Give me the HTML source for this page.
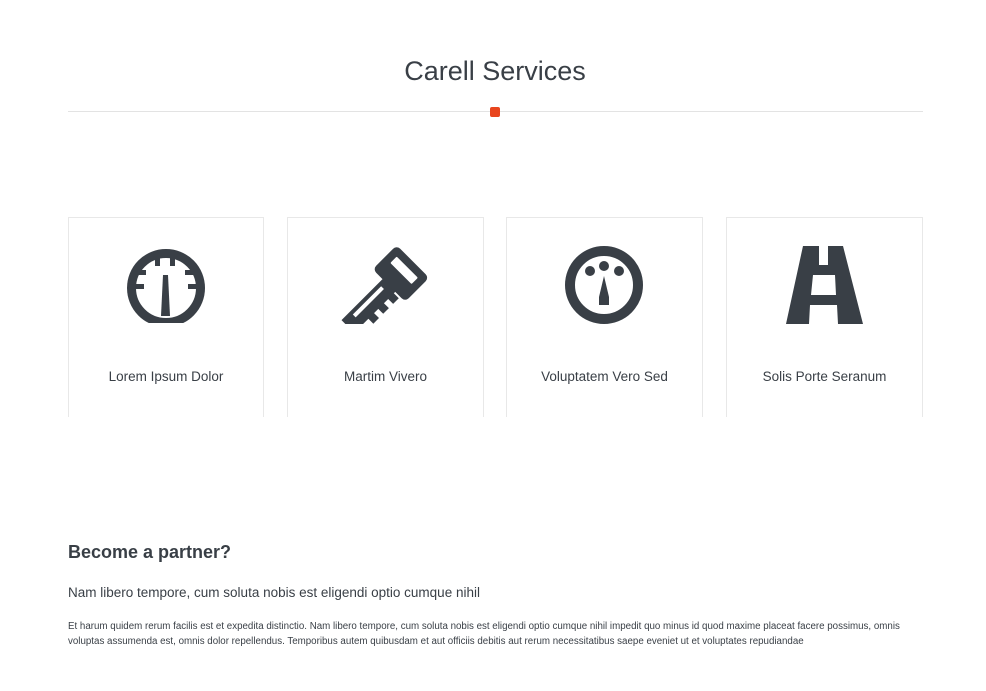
<!DOCTYPE html>
<html><head><style>
body{margin:0;width:986px;height:691px;background:#fff;font-family:"Liberation Sans",sans-serif;color:#393f46;position:relative;overflow:hidden}
h1{position:absolute;top:56px;left:0;width:990px;text-align:center;margin:0;font-weight:normal;font-size:27px;color:#393f46}
.line{position:absolute;left:68px;top:111px;width:855px;height:1px;background:#e3e3e3}
.dot{position:absolute;left:490px;top:107px;width:10px;height:10px;background:#e8451e;border-radius:2px}
.card{position:absolute;top:217px;height:200px;border:1px solid #e8e8e8;border-bottom:none;box-sizing:border-box}
.card span{position:absolute;top:151px;width:100%;text-align:center;font-size:13.5px;color:#393f46}
h3{position:absolute;left:68px;top:542px;margin:0;font-size:18px;font-weight:bold}
p.a{position:absolute;left:68px;top:585px;margin:0;font-size:13.5px}
p.b{position:absolute;left:68px;top:619px;margin:0;font-size:9.75px;line-height:15px;width:845px}
svg{position:absolute;left:0;top:0}
</style></head><body>
<h1>Carell Services</h1>
<div class="line"></div><div class="dot"></div>
<div class="card" style="left:68px;width:196px"><span>Lorem Ipsum Dolor</span></div>
<div class="card" style="left:287px;width:197px"><span>Martim Vivero</span></div>
<div class="card" style="left:506px;width:197px"><span>Voluptatem Vero Sed</span></div>
<div class="card" style="left:726px;width:197px"><span>Solis Porte Seranum</span></div>
<svg width="986" height="691" fill="#393f46">
<defs><clipPath id="c1"><rect x="100" y="230" width="140" height="93"/></clipPath>
<clipPath id="c2"><rect x="300" y="230" width="160" height="94"/></clipPath></defs>
<g clip-path="url(#c1)"><circle cx="166" cy="288" r="34.5" fill="none" stroke="#393f46" stroke-width="9"/></g>
<rect x="155" y="257" width="5" height="9"/><rect x="170" y="257" width="5" height="9"/>
<rect x="136" y="270" width="10" height="5"/><rect x="134" y="284" width="10" height="5"/>
<rect x="185" y="270" width="10" height="5"/><rect x="188" y="284" width="10" height="5"/>
<polygon points="163,275 168,275 170,316 161,316"/>
<g clip-path="url(#c2)">
<g transform="translate(350,323) rotate(-45)">
<path d="M-4 -8 L60 -8 L60 10 L52 10 L52 17 L44 17 L44 10 L38 10 L38 17 L30 17 L30 10 L24 10 L24 17 L16 17 L16 10 L-4 10 Z"/>
<rect x="8" y="-4" width="40" height="4" fill="#fff"/>
<rect x="54" y="-22" width="34" height="46" rx="5"/>
<rect x="71" y="-14" width="9" height="30" rx="1" fill="#fff"/>
</g></g>
<circle cx="604" cy="285" r="34" fill="none" stroke="#393f46" stroke-width="10"/>
<circle cx="590" cy="271" r="5"/><circle cx="604" cy="266" r="5"/><circle cx="619" cy="271" r="5"/>
<polygon points="604,276 609,297 609,305 599,305 599,297"/>
<path d="M803 246H843L863 324H786Z M819 246V265H828V246Z M813 275L811 295H836L835 275Z M810 305L809 324H838L837 305Z" fill-rule="evenodd"/>
</svg>
<h3>Become a partner?</h3>
<p class="a">Nam libero tempore, cum soluta nobis est eligendi optio cumque nihil</p>
<p class="b">Et harum quidem rerum facilis est et expedita distinctio. Nam libero tempore, cum soluta nobis est eligendi optio cumque nihil impedit quo minus id quod maxime placeat facere possimus, omnis voluptas assumenda est, omnis dolor repellendus. Temporibus autem quibusdam et aut officiis debitis aut rerum necessitatibus saepe eveniet ut et voluptates repudiandae</p>
</body></html>
